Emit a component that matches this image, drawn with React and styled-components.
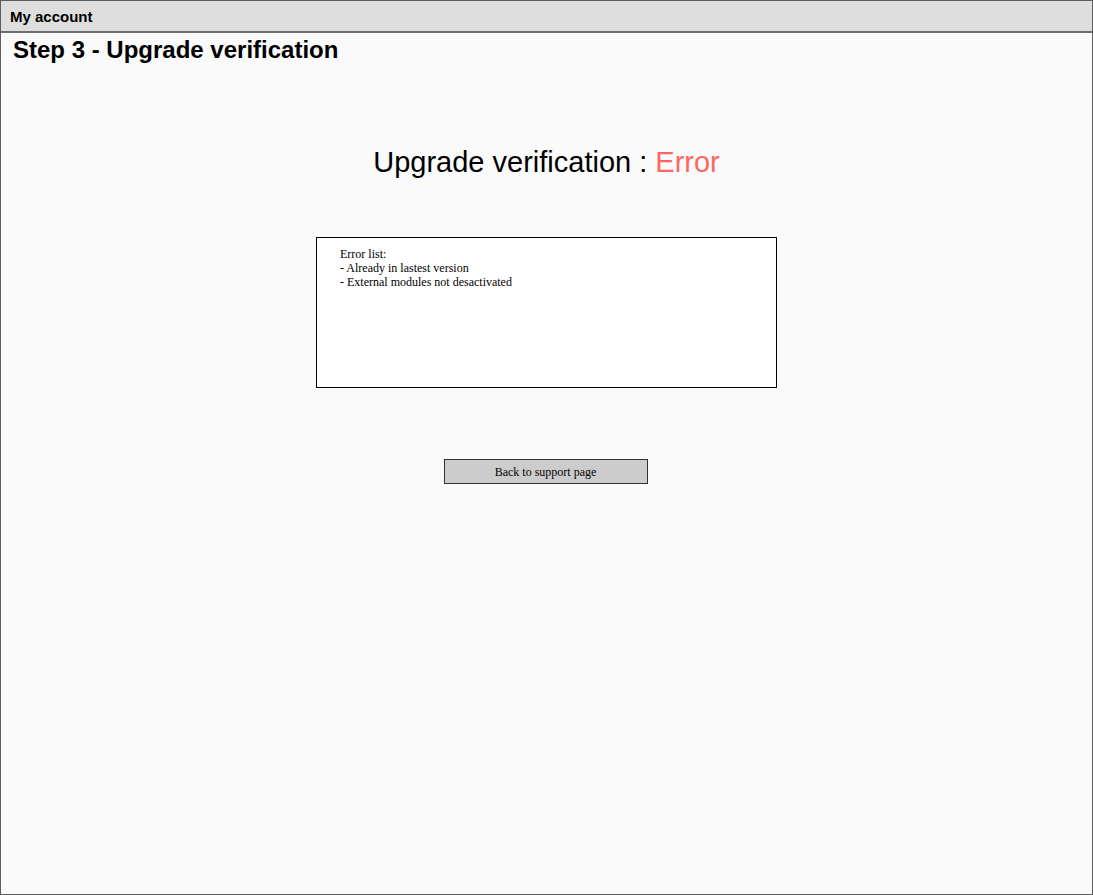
import React from 'react';
import styled, { createGlobalStyle } from 'styled-components';

const GlobalStyle = createGlobalStyle`
    html, body {
        margin: 0;
        padding: 0;
        background: #fafafa;
    }
`;

const Frame = styled.div`
    width: 1093px;
    height: 895px;
    box-sizing: border-box;
    border: 1px solid #5e5e5e;
    background: #fafafa;
    display: flex;
    flex-direction: column;
    font-family: "Liberation Sans", Arial, sans-serif;
`;

const TopBar = styled.div`
    height: 30px;
    background: #dedede;
    border-bottom: 2px solid #6e6e6e;
    display: flex;
    align-items: center;
    padding: 0 9px;
    font-size: 15px;
    font-weight: bold;
    color: #000;
`;

const StepTitle = styled.h1`
    margin: 3px 0 0;
    padding-left: 12px;
    font-size: 24px;
    line-height: 28px;
    font-weight: bold;
    color: #000;
`;

const Content = styled.div`
    display: flex;
    flex-direction: column;
    align-items: center;
`;

const Status = styled.h2`
    margin: 82px 0 0;
    font-size: 29px;
    line-height: 33px;
    font-weight: normal;
    color: #000;

    span {
        color: #ff6666;
    }
`;

const ErrorBox = styled.div`
    margin-top: 58px;
    width: 461px;
    height: 151px;
    box-sizing: border-box;
    border: 1px solid #000;
    background: #fff;
    padding: 9px 23px;
    font-family: "Liberation Serif", "Times New Roman", serif;
    font-size: 12px;
    line-height: 14px;
    color: #000;
`;

const Button = styled.button`
    margin-top: 71px;
    margin-right: 2px;
    width: 204px;
    height: 25px;
    box-sizing: border-box;
    border: 1px solid #333;
    background: #cccccc;
    font-family: "Liberation Serif", "Times New Roman", serif;
    font-size: 12px;
    line-height: 14px;
    color: #000;
    padding: 1px 0 0;
    cursor: pointer;
`;

const errors = ['Already in lastest version', 'External modules not desactivated'];

const App = () => {
    return (
        <>
            <GlobalStyle />
            <Frame>
                <TopBar>My account</TopBar>
                <StepTitle>Step 3 - Upgrade verification</StepTitle>
                <Content>
                    <Status>
                        Upgrade verification : <span>Error</span>
                    </Status>
                    <ErrorBox>
                        <div>Error list:</div>
                        {errors.map((e) => (
                            <div key={e}>- {e}</div>
                        ))}
                    </ErrorBox>
                    <Button>Back to support page</Button>
                </Content>
            </Frame>
        </>
    );
};

export default App;
